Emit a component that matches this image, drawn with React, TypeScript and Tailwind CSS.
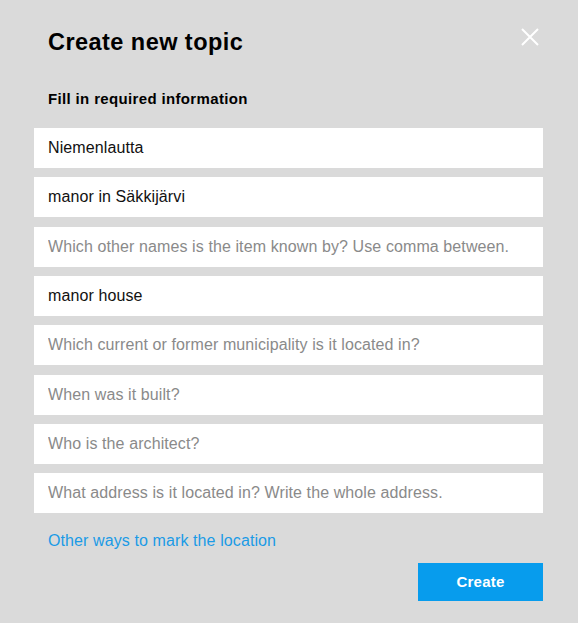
import { useState } from "react";

const fields = [
  { value: "Niemenlautta", placeholder: "Name of the item" },
  { value: "manor in Säkkijärvi", placeholder: "Short description" },
  { value: "", placeholder: "Which other names is the item known by? Use comma between." },
  { value: "manor house", placeholder: "Type" },
  { value: "", placeholder: "Which current or former municipality is it located in?" },
  { value: "", placeholder: "When was it built?" },
  { value: "", placeholder: "Who is the architect?" },
  { value: "", placeholder: "What address is it located in? Write the whole address." },
];

export default function App() {
  const [values, setValues] = useState(fields.map((f) => f.value));

  return (
    <div className="min-h-[623px] w-full bg-[#dadada] pl-[34px] pr-[35px] pt-[28px] pb-6 font-['Liberation_Sans',Arial,sans-serif] text-[#111]">
      <div className="flex items-start justify-between pl-[14px]">
        <h1 className="text-[23.5px] leading-[28px] font-bold tracking-[0.45px] text-black">Create new topic</h1>
        <button type="button" aria-label="Close" className="mr-[4px] text-white">
          <svg width="18" height="18" viewBox="0 0 18 18" fill="none" stroke="currentColor" strokeWidth="2">
            <path d="M1 1L17 17M17 1L1 17" />
          </svg>
        </button>
      </div>

      <p className="mt-[33px] pl-[14px] text-[15px] leading-[20px] font-bold tracking-[0.35px] text-black">
        Fill in required information
      </p>

      <div className="mt-[19px] flex flex-col gap-[9.33px]">
        {fields.map((f, i) => (
          <input
            key={i}
            value={values[i]}
            placeholder={f.placeholder}
            onChange={(e) => setValues(values.map((v, j) => (j === i ? e.target.value : v)))}
            className="h-10 w-full bg-white px-[14px] text-[16px] tracking-[0.1px] text-[#111] outline-none placeholder:text-[#8a8a8a]"
          />
        ))}
      </div>

      <a href="#" className="mt-[16px] block pl-[14px] text-[16px] leading-[24px] tracking-[0.1px] text-[#1a9be6]">
        Other ways to mark the location
      </a>

      <div className="mt-[10px] flex justify-end">
        <button type="button" className="h-[38px] w-[125px] bg-[#079ced] text-[15px] font-bold tracking-[0.2px] text-white">
          Create
        </button>
      </div>
    </div>
  );
}
